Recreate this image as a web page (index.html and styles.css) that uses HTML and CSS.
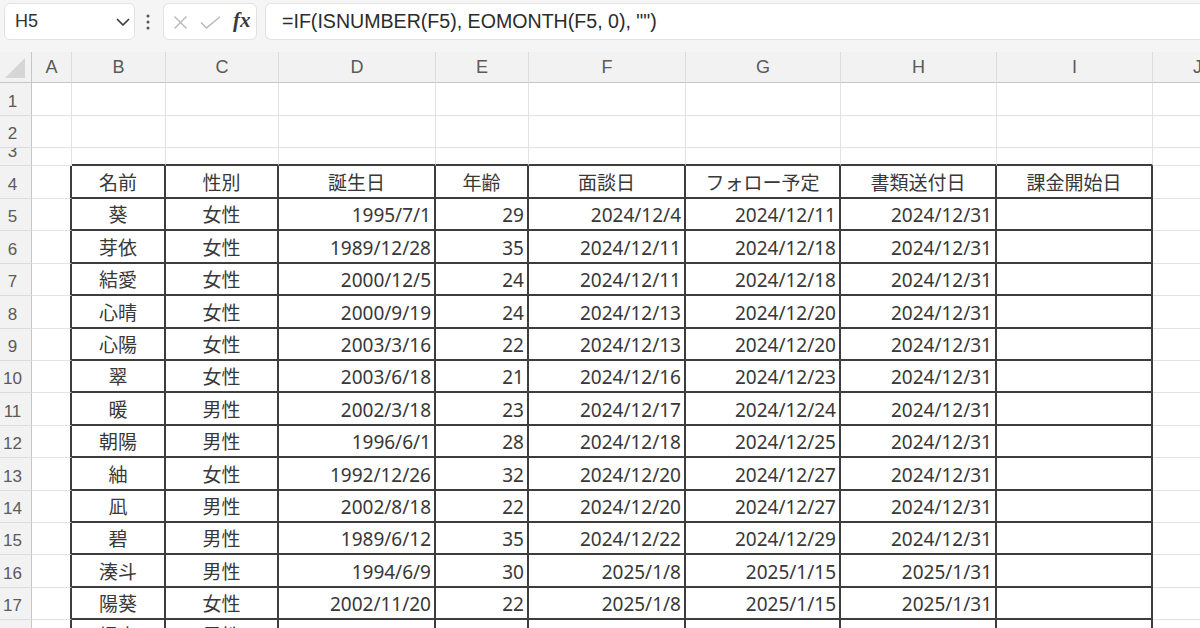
FILE: index.html
```html
<!DOCTYPE html>
<html lang="ja">
<head>
<meta charset="utf-8">
<title>Sheet</title>
<link rel="stylesheet" href="styles.css">
</head>
<body>
<div class="topbar">
  <div class="namebox">
    <span class="nb-text">H5</span>
    <svg class="chev" width="14" height="9" viewBox="0 0 14 9"><path d="M1.5 1.5 L7 7 L12.5 1.5" fill="none" stroke="#3c3c3c" stroke-width="1.7" stroke-linecap="round" stroke-linejoin="round"/></svg>
  </div>
  <div class="kebab">
    <svg width="4" height="16" viewBox="0 0 4 16"><circle cx="2" cy="2" r="1.5" fill="#555"/><circle cx="2" cy="8" r="1.5" fill="#555"/><circle cx="2" cy="14" r="1.5" fill="#555"/></svg>
  </div>
  <div class="fxbox">
    <svg class="ico-x" width="17" height="13" viewBox="0 0 17 13"><path d="M2.5 0.5 L14.5 12.5 M14.5 0.5 L2.5 12.5" fill="none" stroke="#b8b8b8" stroke-width="1.4"/></svg>
    <svg class="ico-ok" width="21" height="13" viewBox="0 0 21 13"><path d="M1 6.5 L6.5 12 L20 0.8" fill="none" stroke="#b8b8b8" stroke-width="1.4"/></svg>
    <span class="fx">fx</span>
  </div>
  <div class="formula">=IF(ISNUMBER(F5), EOMONTH(F5, 0), "")</div>
</div>

<div class="sheet">
  <div class="corner"><svg width="22" height="21" viewBox="0 0 22 21"><polygon points="21,0 21,20 1,20" fill="#d6d6d6"/></svg></div>
  <div class="ch">A</div><div class="ch">B</div><div class="ch">C</div><div class="ch">D</div><div class="ch">E</div><div class="ch">F</div><div class="ch">G</div><div class="ch">H</div><div class="ch">I</div><div class="ch">J</div>

  <div class="rh">1</div><div class="c"></div><div class="c"></div><div class="c"></div><div class="c"></div><div class="c"></div><div class="c"></div><div class="c"></div><div class="c"></div><div class="c"></div><div class="c"></div>
  <div class="rh">2</div><div class="c"></div><div class="c"></div><div class="c"></div><div class="c"></div><div class="c"></div><div class="c"></div><div class="c"></div><div class="c"></div><div class="c"></div><div class="c"></div>
  <div class="rh">3</div><div class="c"></div><div class="c tb"></div><div class="c tb"></div><div class="c tb"></div><div class="c tb"></div><div class="c tb"></div><div class="c tb"></div><div class="c tb"></div><div class="c tb"></div><div class="c"></div>

  <div class="rh">4</div><div class="c lb"></div><div class="c t ctr">名前</div><div class="c t ctr">性別</div><div class="c t ctr">誕生日</div><div class="c t ctr">年齢</div><div class="c t ctr">面談日</div><div class="c t ctr">フォロー予定</div><div class="c t ctr">書類送付日</div><div class="c t ctr">課金開始日</div><div class="c"></div>

  <div class="rh">5</div><div class="c lb"></div><div class="c t ctr">葵</div><div class="c t ctr">女性</div><div class="c t r">1995/7/1</div><div class="c t r">29</div><div class="c t r">2024/12/4</div><div class="c t r">2024/12/11</div><div class="c t r">2024/12/31</div><div class="c t"></div><div class="c"></div>
  <div class="rh">6</div><div class="c lb"></div><div class="c t ctr">芽依</div><div class="c t ctr">女性</div><div class="c t r">1989/12/28</div><div class="c t r">35</div><div class="c t r">2024/12/11</div><div class="c t r">2024/12/18</div><div class="c t r">2024/12/31</div><div class="c t"></div><div class="c"></div>
  <div class="rh">7</div><div class="c lb"></div><div class="c t ctr">結愛</div><div class="c t ctr">女性</div><div class="c t r">2000/12/5</div><div class="c t r">24</div><div class="c t r">2024/12/11</div><div class="c t r">2024/12/18</div><div class="c t r">2024/12/31</div><div class="c t"></div><div class="c"></div>
  <div class="rh">8</div><div class="c lb"></div><div class="c t ctr">心晴</div><div class="c t ctr">女性</div><div class="c t r">2000/9/19</div><div class="c t r">24</div><div class="c t r">2024/12/13</div><div class="c t r">2024/12/20</div><div class="c t r">2024/12/31</div><div class="c t"></div><div class="c"></div>
  <div class="rh">9</div><div class="c lb"></div><div class="c t ctr">心陽</div><div class="c t ctr">女性</div><div class="c t r">2003/3/16</div><div class="c t r">22</div><div class="c t r">2024/12/13</div><div class="c t r">2024/12/20</div><div class="c t r">2024/12/31</div><div class="c t"></div><div class="c"></div>
  <div class="rh">10</div><div class="c lb"></div><div class="c t ctr">翠</div><div class="c t ctr">女性</div><div class="c t r">2003/6/18</div><div class="c t r">21</div><div class="c t r">2024/12/16</div><div class="c t r">2024/12/23</div><div class="c t r">2024/12/31</div><div class="c t"></div><div class="c"></div>
  <div class="rh">11</div><div class="c lb"></div><div class="c t ctr">暖</div><div class="c t ctr">男性</div><div class="c t r">2002/3/18</div><div class="c t r">23</div><div class="c t r">2024/12/17</div><div class="c t r">2024/12/24</div><div class="c t r">2024/12/31</div><div class="c t"></div><div class="c"></div>
  <div class="rh">12</div><div class="c lb"></div><div class="c t ctr">朝陽</div><div class="c t ctr">男性</div><div class="c t r">1996/6/1</div><div class="c t r">28</div><div class="c t r">2024/12/18</div><div class="c t r">2024/12/25</div><div class="c t r">2024/12/31</div><div class="c t"></div><div class="c"></div>
  <div class="rh">13</div><div class="c lb"></div><div class="c t ctr">紬</div><div class="c t ctr">女性</div><div class="c t r">1992/12/26</div><div class="c t r">32</div><div class="c t r">2024/12/20</div><div class="c t r">2024/12/27</div><div class="c t r">2024/12/31</div><div class="c t"></div><div class="c"></div>
  <div class="rh">14</div><div class="c lb"></div><div class="c t ctr">凪</div><div class="c t ctr">男性</div><div class="c t r">2002/8/18</div><div class="c t r">22</div><div class="c t r">2024/12/20</div><div class="c t r">2024/12/27</div><div class="c t r">2024/12/31</div><div class="c t"></div><div class="c"></div>
  <div class="rh">15</div><div class="c lb"></div><div class="c t ctr">碧</div><div class="c t ctr">男性</div><div class="c t r">1989/6/12</div><div class="c t r">35</div><div class="c t r">2024/12/22</div><div class="c t r">2024/12/29</div><div class="c t r">2024/12/31</div><div class="c t"></div><div class="c"></div>
  <div class="rh">16</div><div class="c lb"></div><div class="c t ctr">湊斗</div><div class="c t ctr">男性</div><div class="c t r">1994/6/9</div><div class="c t r">30</div><div class="c t r">2025/1/8</div><div class="c t r">2025/1/15</div><div class="c t r">2025/1/31</div><div class="c t"></div><div class="c"></div>
  <div class="rh">17</div><div class="c lb"></div><div class="c t ctr">陽葵</div><div class="c t ctr">女性</div><div class="c t r">2002/11/20</div><div class="c t r">22</div><div class="c t r">2025/1/8</div><div class="c t r">2025/1/15</div><div class="c t r">2025/1/31</div><div class="c t"></div><div class="c"></div>
  <div class="rh">18</div><div class="c lb"></div><div class="c t ctr">颯真</div><div class="c t ctr">男性</div><div class="c t r">1999/4/15</div><div class="c t r">25</div><div class="c t r">2025/1/9</div><div class="c t r">2025/1/16</div><div class="c t r">2025/1/31</div><div class="c t"></div><div class="c"></div>
</div>
</body>
</html>
```

FILE: styles.css
```css
html, body {
  margin: 0;
  padding: 0;
}
body {
  width: 1200px;
  height: 628px;
  overflow: hidden;
  background: #ffffff;
  font-family: "Liberation Sans", Arial, sans-serif;
}

/* ---------- formula bar ---------- */
.topbar {
  height: 52px;
  box-sizing: border-box;
  width: 1240px;
  display: flex;
  align-items: flex-start;
  padding: 3px 0 0 4px;
  background: #f5f5f5;
}
.namebox,
.fxbox,
.formula {
  height: 37px;
  box-sizing: border-box;
  background: #ffffff;
  border: 1px solid #e2e2e2;
  border-radius: 6px;
}
.namebox {
  width: 131px;
  display: flex;
  align-items: center;
  justify-content: space-between;
  padding: 0 4px 0 10px;
}
.nb-text {
  font-size: 18px;
  color: #333;
}
.chev {
  margin-top: 1px;
}
.kebab {
  width: 28px;
  height: 37px;
  display: flex;
  align-items: center;
  justify-content: center;
  padding-right: 2px;
  box-sizing: border-box;
}
.fxbox {
  width: 94px;
  display: flex;
  align-items: center;
  padding-left: 8px;
}
.ico-x {
  margin-top: 1px;
}
.ico-ok {
  margin-left: 11px;
  margin-top: 1px;
}
.fx {
  margin-left: 12px;
  font-family: "Liberation Serif", "DejaVu Serif", serif;
  font-style: italic;
  font-weight: bold;
  font-size: 21px;
  color: #3a3a3a;
  line-height: 1;
  margin-top: -2px;
}
.formula {
  flex: 1;
  margin-left: 8px;
  border-right: none;
  border-top-right-radius: 0;
  border-bottom-right-radius: 0;
  display: flex;
  align-items: center;
  padding-left: 16px;
  font-size: 19.6px;
  color: #2b2b2b;
  white-space: nowrap;
}

/* ---------- grid ---------- */
.sheet {
  display: grid;
  grid-template-columns: 32px 40px 94px 113px 157px 93px 157px 155px 156px 156px 90px;
  grid-template-rows: 31px 33px 32px 18px 33px repeat(13, 32.4px) 32px;
  width: 1243px;
}
.corner {
  background: #f2f2f2;
  border-right: 1px solid #c6c6c6;
  border-bottom: 1px solid #c6c6c6;
  box-sizing: border-box;
  display: flex;
  align-items: flex-end;
  padding: 0 0 3px 4px;
}
.ch {
  background: #f2f2f2;
  border-right: 1px solid #dcdcdc;
  border-bottom: 1px solid #c6c6c6;
  box-sizing: border-box;
  display: flex;
  align-items: center;
  justify-content: center;
  font-size: 18px;
  color: #5a5a5a;
  padding-top: 1px;
}
.rh {
  background: #f2f2f2;
  border-right: 1px solid #c6c6c6;
  border-bottom: 1px solid #dcdcdc;
  box-sizing: border-box;
  display: flex;
  align-items: flex-end;
  justify-content: center;
  overflow: hidden;
  padding: 0 6px 3px 0;
  font-size: 17px;
  line-height: 20px;
  color: #5a5a5a;
}
.c {
  border-right: 1px solid #e2e2e2;
  border-bottom: 1px solid #e2e2e2;
  box-sizing: border-box;
  display: flex;
  align-items: flex-end;
  overflow: hidden;
  padding: 0 3px 2px 3px;
  font-family: "Noto Sans", "Noto Sans CJK JP", sans-serif;
  font-size: 19px;
  line-height: 26px;
  color: #383838;
  white-space: nowrap;
}
.t {
  border-right: 2px solid #3d3d3d;
  border-bottom: 2px solid #3d3d3d;
  padding-bottom: 1px;
}
.tb {
  border-bottom: 2px solid #3d3d3d;
}
.lb {
  border-right: 2px solid #3d3d3d;
}
.ctr {
  justify-content: center;
}
.r {
  justify-content: flex-end;
}
```
